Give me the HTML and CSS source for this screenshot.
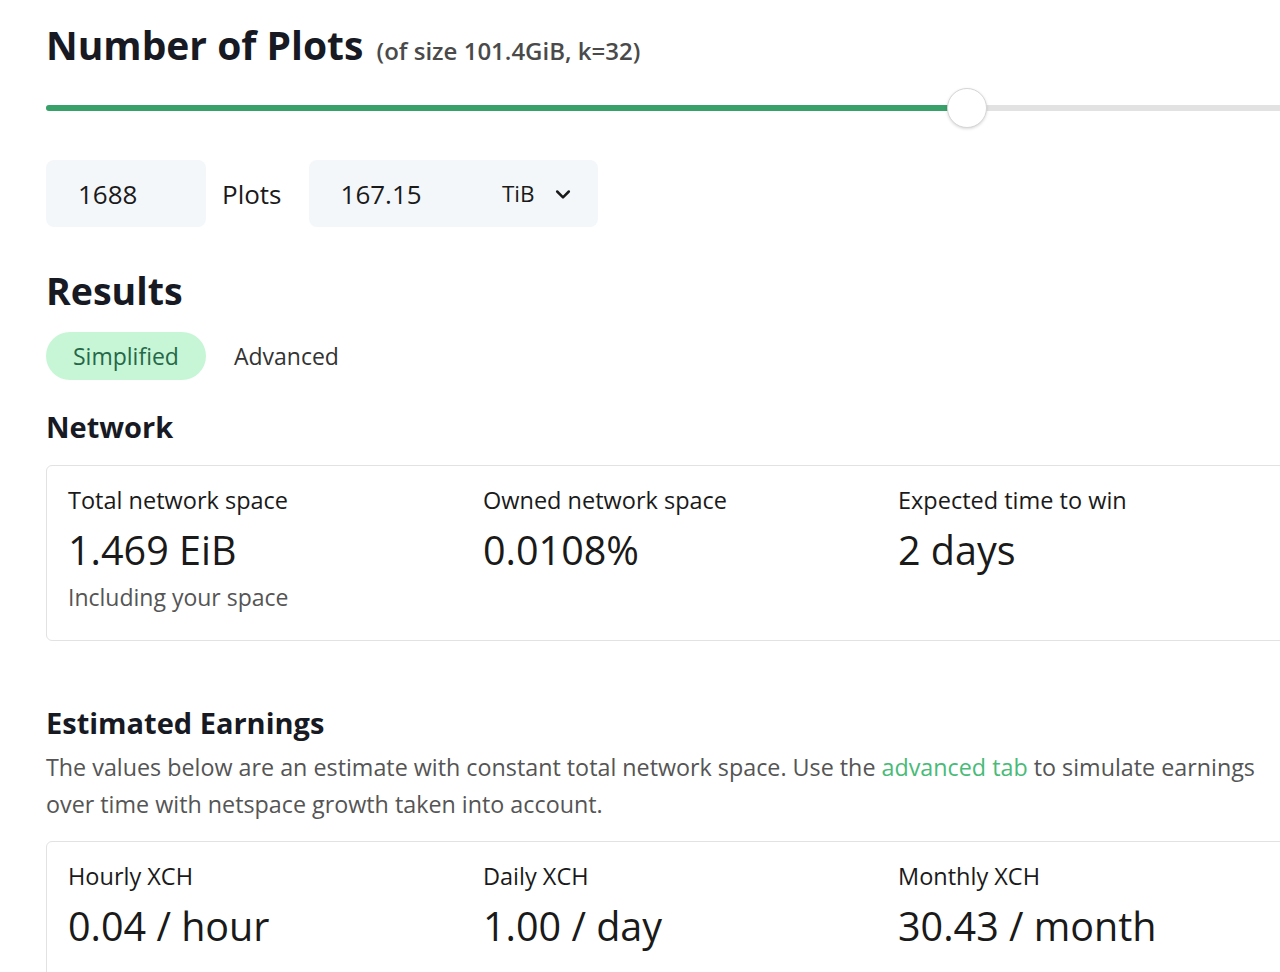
FILE: index.html
```html
<!DOCTYPE html>
<html lang="en">
<head>
<meta charset="utf-8">
<title>Plot calculator</title>
<link rel="stylesheet" href="styles.css">
</head>
<body>
<main class="page">
  <h1 class="title">Number of Plots <span class="title-sub">(of size 101.4GiB, k=32)</span></h1>

  <div class="slider">
    <div class="slider-track">
      <div class="slider-fill" style="width: 921px"></div>
    </div>
    <div class="slider-thumb" style="left: 901px"></div>
  </div>

  <div class="inputs">
    <div class="field field-plots">1688</div>
    <span class="field-label">Plots</span>
    <div class="field field-size">
      <span class="field-value">167.15</span>
      <span class="unit">TiB
        <svg class="chev" viewBox="0 0 24 24" width="20" height="20" aria-hidden="true"><polyline points="5,9 12,16 19,9" fill="none" stroke="#1a1a1a" stroke-width="3" stroke-linecap="round" stroke-linejoin="round"/></svg>
      </span>
    </div>
  </div>

  <h2 class="h-results">Results</h2>
  <div class="tabs">
    <span class="tab tab-active">Simplified</span>
    <span class="tab">Advanced</span>
  </div>

  <h3 class="h-section">Network</h3>
  <div class="card">
    <div class="stat">
      <div class="stat-label">Total network space</div>
      <div class="stat-value">1.469 EiB</div>
      <div class="stat-help">Including your space</div>
    </div>
    <div class="stat">
      <div class="stat-label">Owned network space</div>
      <div class="stat-value">0.0108%</div>
    </div>
    <div class="stat">
      <div class="stat-label">Expected time to win</div>
      <div class="stat-value">2 days</div>
    </div>
  </div>

  <h3 class="h-section h-earn">Estimated Earnings</h3>
  <p class="desc">The values below are an estimate with constant total network space. Use the <a class="link" href="#">advanced tab</a> to simulate earnings over time with netspace growth taken into account.</p>

  <div class="card card-earn">
    <div class="stat">
      <div class="stat-label">Hourly XCH</div>
      <div class="stat-value">0.04 / hour</div>
    </div>
    <div class="stat">
      <div class="stat-label">Daily XCH</div>
      <div class="stat-value">1.00 / day</div>
    </div>
    <div class="stat">
      <div class="stat-label">Monthly XCH</div>
      <div class="stat-value">30.43 / month</div>
    </div>
  </div>
</main>
</body>
</html>
```

FILE: styles.css
```css
html, body {
  margin: 0;
  padding: 0;
  background: #ffffff;
  overflow: hidden;
}

body {
  font-family: "Open Sans", "Noto Sans", sans-serif;
  color: #1a202c;
}

.page {
  width: 1300px;
  padding: 21px 0 0 46px;
}

.title {
  margin: 0;
  font-size: 39px;
  font-weight: 700;
  line-height: 48px;
  color: #171923;
}

.title-sub {
  font-size: 24px;
  line-height: 1;
  font-weight: 600;
  color: #4a4a4a;
  margin-left: 3px;
}

.slider {
  position: relative;
  height: 40px;
  margin-top: 19px;
  display: flex;
  align-items: center;
}

.slider-track {
  width: 100%;
  height: 6px;
  border-radius: 3px;
  background: #e2e2e2;
}

.slider-fill {
  height: 100%;
  border-radius: 3px;
  background: #38a169;
}

.slider-thumb {
  position: absolute;
  top: 0;
  width: 38px;
  height: 38px;
  border-radius: 50%;
  background: #ffffff;
  border: 1px solid #d6d6d6;
  box-shadow: 0 1px 3px rgba(0,0,0,0.15);
}

.inputs {
  display: flex;
  align-items: center;
  margin-top: 32px;
  height: 67px;
}

.field {
  height: 67px;
  box-sizing: border-box;
  background: #f4f7fa;
  border-radius: 8px;
  display: flex;
  align-items: center;
  font-size: 26px;
  color: #1a1a1a;
}

.field-plots {
  width: 160px;
  padding-left: 32px;
}

.field-label {
  font-size: 26px;
  color: #1a1a1a;
  margin: 0 27px 0 16px;
}

.field-size {
  width: 289px;
  padding-left: 32px;
  justify-content: space-between;
  padding-right: 25px;
}

.unit {
  display: flex;
  align-items: center;
  gap: 18px;
  font-size: 22.5px;
}

.h-results {
  margin: 41px 0 0 0;
  font-size: 37.5px;
  font-weight: 700;
  line-height: 46px;
  color: #171923;
}

.tabs {
  display: flex;
  align-items: center;
  gap: 1px;
  margin-top: 18px;
}

.tab {
  height: 48px;
  display: flex;
  align-items: center;
  padding: 0 27px;
  border-radius: 24px;
  font-size: 23px;
  font-weight: 500;
  color: #333333;
}

.tab-active {
  background: #c6f6d5;
  color: #276749;
}

.h-section {
  margin: 27px 0 0 0;
  font-size: 29px;
  font-weight: 700;
  line-height: 40px;
  color: #171923;
}

.card {
  margin-top: 18px;
  border: 1px solid #e2e2e2;
  border-radius: 6px;
  display: grid;
  grid-template-columns: 415px 415px 415px;
  padding: 16px 22px 24px 21px;
  box-sizing: border-box;
  width: 1270px;
}

.stat-label {
  font-size: 23.5px;
  line-height: 36px;
  color: #1a1a1a;
}

.stat-value {
  font-size: 39.5px;
  line-height: 56px;
  color: #1a1a1a;
  margin-top: 4px;
}

.stat-help {
  font-size: 23px;
  line-height: 38px;
  color: #555555;
}

.h-earn {
  margin-top: 62px;
}

.desc {
  margin: 6px 0 0 0;
  font-size: 23.3px;
  line-height: 37px;
  color: #555555;
  width: 1228px;
}

.link {
  color: #48bb78;
  text-decoration: none;
}

.card-earn {
  margin-top: 18px;
}
```
